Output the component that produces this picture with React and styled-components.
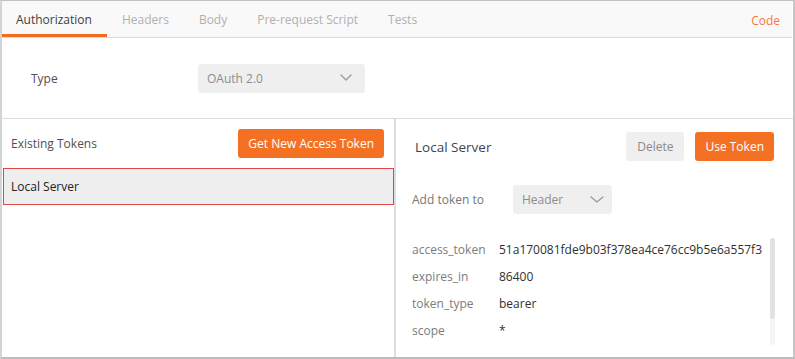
import styled, { createGlobalStyle } from 'styled-components';

const GlobalStyle = createGlobalStyle`
  html, body {
    margin: 0;
    padding: 0;
    background: #fff;
  }
  body {
    font-family: "Open Sans", "Noto Sans", sans-serif;
    font-size: 12px;
  }
  * {
    box-sizing: border-box;
  }
`;

const Frame = styled.div`
  width: 795px;
  height: 359px;
  border-top: 1px solid #c2c2c2;
  border-left: 2px solid #d4d4d4;
  border-right: 2px solid #c6c6c6;
  border-bottom: 2px solid #bcbcbc;
  display: flex;
  flex-direction: column;
  overflow: hidden;
`;

const TabBar = styled.div`
  display: flex;
  align-items: stretch;
  height: 37px;
  margin-right: 1px;
  background: #f9f9f9;
  border-bottom: 1px solid #dcdcdc;
`;

const Tab = styled.div`
  display: flex;
  align-items: center;
  padding: 3px 15px 0;
  margin-left: ${p => (p.$first ? '-1px' : '0')};
  color: ${p => (p.$active ? '#404040' : '#b0b0b0')};
  font-size: 12px;
  border-bottom: 3px solid ${p => (p.$active ? '#f26b21' : 'transparent')};
`;

const CodeLink = styled.div`
  margin-left: auto;
  display: flex;
  align-items: center;
  padding: 3px 12px 0 0;
  color: #f47a3c;
  font-size: 12px;
`;

const TypeRow = styled.div`
  display: flex;
  align-items: center;
  height: 81px;
  padding-left: 29px;
  border-bottom: 1px solid #dcdcdc;
`;

const FieldLabel = styled.div`
  width: ${p => p.$w}px;
  color: ${p => p.$color || '#505050'};
  font-size: 12px;
`;

const Select = styled.div`
  width: ${p => p.$w}px;
  height: 29px;
  border-radius: 3px;
  background: #efefef;
  color: #8c8c8c;
  font-size: 12px;
  display: flex;
  align-items: center;
  justify-content: space-between;
  padding: 0 ${p => p.$pr}px 0 9px;
`;

const Body = styled.div`
  flex: 1;
  display: flex;
  min-height: 0;
`;

const LeftPane = styled.div`
  width: 394px;
  border-right: 2px solid #dedede;
  display: flex;
  flex-direction: column;
`;

const TokensHeader = styled.div`
  height: 49px;
  display: flex;
  align-items: center;
  justify-content: space-between;
  padding: 0 10px 0 9px;
  color: #505050;
`;

const Button = styled.button`
  height: 29px;
  padding: 0 ${p => p.$px || 10}px;
  border: none;
  border-radius: 3px;
  font-family: inherit;
  font-size: 12px;
  background: ${p => (p.$primary ? '#f47124' : '#efefef')};
  color: ${p => (p.$primary ? '#ffffff' : '#8a8a8a')};
  cursor: pointer;
`;

const TokenRow = styled.div`
  height: 37px;
  margin-left: 1px;
  display: flex;
  align-items: center;
  padding-left: 7px;
  background: #eeeeee;
  border: 1px solid #e04848;
  color: #222;
`;

const RightPane = styled.div`
  flex: 1;
  display: flex;
  flex-direction: column;
  padding: 13px 19px 0 16px;
`;

const DetailHeader = styled.div`
  display: flex;
  align-items: center;
  gap: 11px;
`;

const DetailTitle = styled.div`
  flex: 1;
  padding-left: 3px;
  font-size: 13.5px;
  color: #3d4450;
`;

const AddTokenRow = styled.div`
  display: flex;
  align-items: center;
  margin-top: 24px;
`;

const PropsArea = styled.div`
  display: flex;
  margin-top: 22px;
`;

const PropList = styled.div`
  flex: 1;
`;

const PropRow = styled.div`
  display: flex;
  align-items: center;
  height: 27px;
`;

const PropKey = styled.div`
  width: 87px;
  color: #7c7c7c;
`;

const PropValue = styled.div`
  color: #303030;
  white-space: nowrap;
`;

const Scrollbar = styled.div`
  width: 5px;
  height: 107px;
  margin-top: 2px;
  margin-right: -1px;
  border-radius: 3px;
  background: #f5f5f5;
  display: flex;
  flex-direction: column;
`;

const Thumb = styled.div`
  height: 81px;
  border-radius: 3px;
  background: #e2e2e2;
`;

function Chevron({ w = 12, h = 6 }) {
  return (
    <svg width={w} height={h + 2} viewBox={`0 0 ${w} ${h + 2}`} fill="none">
      <path
        d={`M1 1 L${w / 2} ${h} L${w - 1} 1`}
        stroke="#9c9c9c"
        strokeWidth="1.4"
        strokeLinecap="round"
        strokeLinejoin="round"
      />
    </svg>
  );
}

const tabs = ['Authorization', 'Headers', 'Body', 'Pre-request Script', 'Tests'];

const tokenProps = [
  ['access_token', '51a170081fde9b03f378ea4ce76cc9b5e6a557f3'],
  ['expires_in', '86400'],
  ['token_type', 'bearer'],
  ['scope', '*'],
];

export default function App() {
  return (
    <>
      <GlobalStyle />
      <Frame>
        <TabBar>
          {tabs.map((t, i) => (
            <Tab key={t} $active={i === 0} $first={i === 0}>
              {t}
            </Tab>
          ))}
          <CodeLink>Code</CodeLink>
        </TabBar>

        <TypeRow>
          <FieldLabel $w={167}>Type</FieldLabel>
          <Select $w={167} $pr={13}>
            OAuth 2.0
            <Chevron w={12} h={6} />
          </Select>
        </TypeRow>

        <Body>
          <LeftPane>
            <TokensHeader>
              Existing Tokens
              <Button $primary $px={10}>Get New Access Token</Button>
            </TokensHeader>
            <TokenRow>Local Server</TokenRow>
          </LeftPane>

          <RightPane>
            <DetailHeader>
              <DetailTitle>Local Server</DetailTitle>
              <Button $px={11}>Delete</Button>
              <Button $primary $px={10}>Use Token</Button>
            </DetailHeader>

            <AddTokenRow>
              <FieldLabel $w={101} $color="#777">Add token to</FieldLabel>
              <Select $w={99} $pr={8}>
                Header
                <Chevron w={14} h={6} />
              </Select>
            </AddTokenRow>

            <PropsArea>
              <PropList>
                {tokenProps.map(([k, v]) => (
                  <PropRow key={k}>
                    <PropKey>{k}</PropKey>
                    <PropValue>{v}</PropValue>
                  </PropRow>
                ))}
              </PropList>
              <Scrollbar>
                <Thumb />
              </Scrollbar>
            </PropsArea>
          </RightPane>
        </Body>
      </Frame>
    </>
  );
}
